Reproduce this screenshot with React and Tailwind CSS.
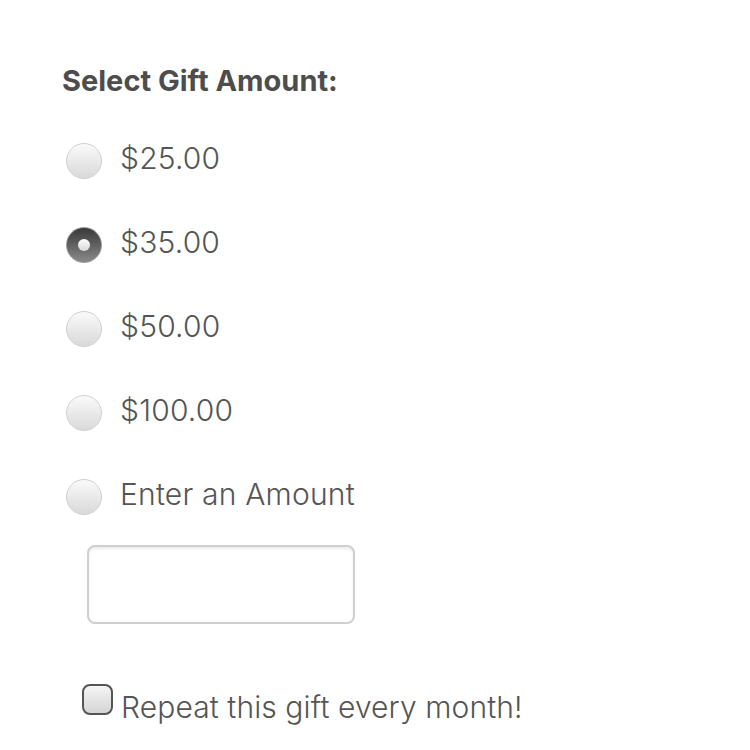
import React, { useState } from "react";

function Radio({ checked }) {
  return checked ? (
    <span className="relative mt-[6px] flex h-[36px] w-[36px] shrink-0 items-center justify-center rounded-full border border-[#9a9a9a] bg-gradient-to-b from-[#3a3a3a] to-[#8a8a8a]">
      <span className="h-[12px] w-[12px] rounded-full bg-gradient-to-b from-white to-[#d8d8d8]" />
    </span>
  ) : (
    <span className="mt-[6px] h-[36px] w-[36px] shrink-0 rounded-full border border-[#d0d0d0] bg-gradient-to-b from-[#fafafa] to-[#d9d9d9]" />
  );
}

export default function App() {
  const [sel, setSel] = useState(1);
  const options = ["$25.00", "$35.00", "$50.00", "$100.00", "Enter an Amount"];
  return (
    <div className="h-[750px] w-[750px] bg-white pl-[62px] pt-[64px] text-[#555]" style={{ fontFamily: "Inter, 'Open Sans', sans-serif" }}>
      <div className="text-[29px] font-bold leading-[34px] text-[#4d4d4d]">Select Gift Amount:</div>
      <div className="mt-[42px] flex flex-col gap-[48px]">
        {options.map((o, i) => (
          <div key={o} className="flex h-[36px] items-center gap-[18px] pl-[4px]" onClick={() => setSel(i)}>
            <Radio checked={sel === i} />
            <span className="text-[30px] font-light leading-[36px] tracking-[0.2px]">{o}</span>
          </div>
        ))}
      </div>
      <div className="ml-[25px] mt-[33px] h-[79px] w-[268px] rounded-[8px] border-2 border-[#cfcfcf] shadow-[inset_0_2px_3px_rgba(0,0,0,0.08)]" />
      <div className="mt-[59px] flex items-start gap-[8px] pl-[20px]">
        <span className="mt-[1px] h-[31px] w-[31px] shrink-0 rounded-[8px] border-2 border-[#555] bg-gradient-to-b from-[#f5f5f5] to-[#d5d5d5]" />
        <span className="mt-[6px] text-[30px] font-light leading-[36px] tracking-[0.1px]">Repeat this gift every month!</span>
      </div>
    </div>
  );
}
